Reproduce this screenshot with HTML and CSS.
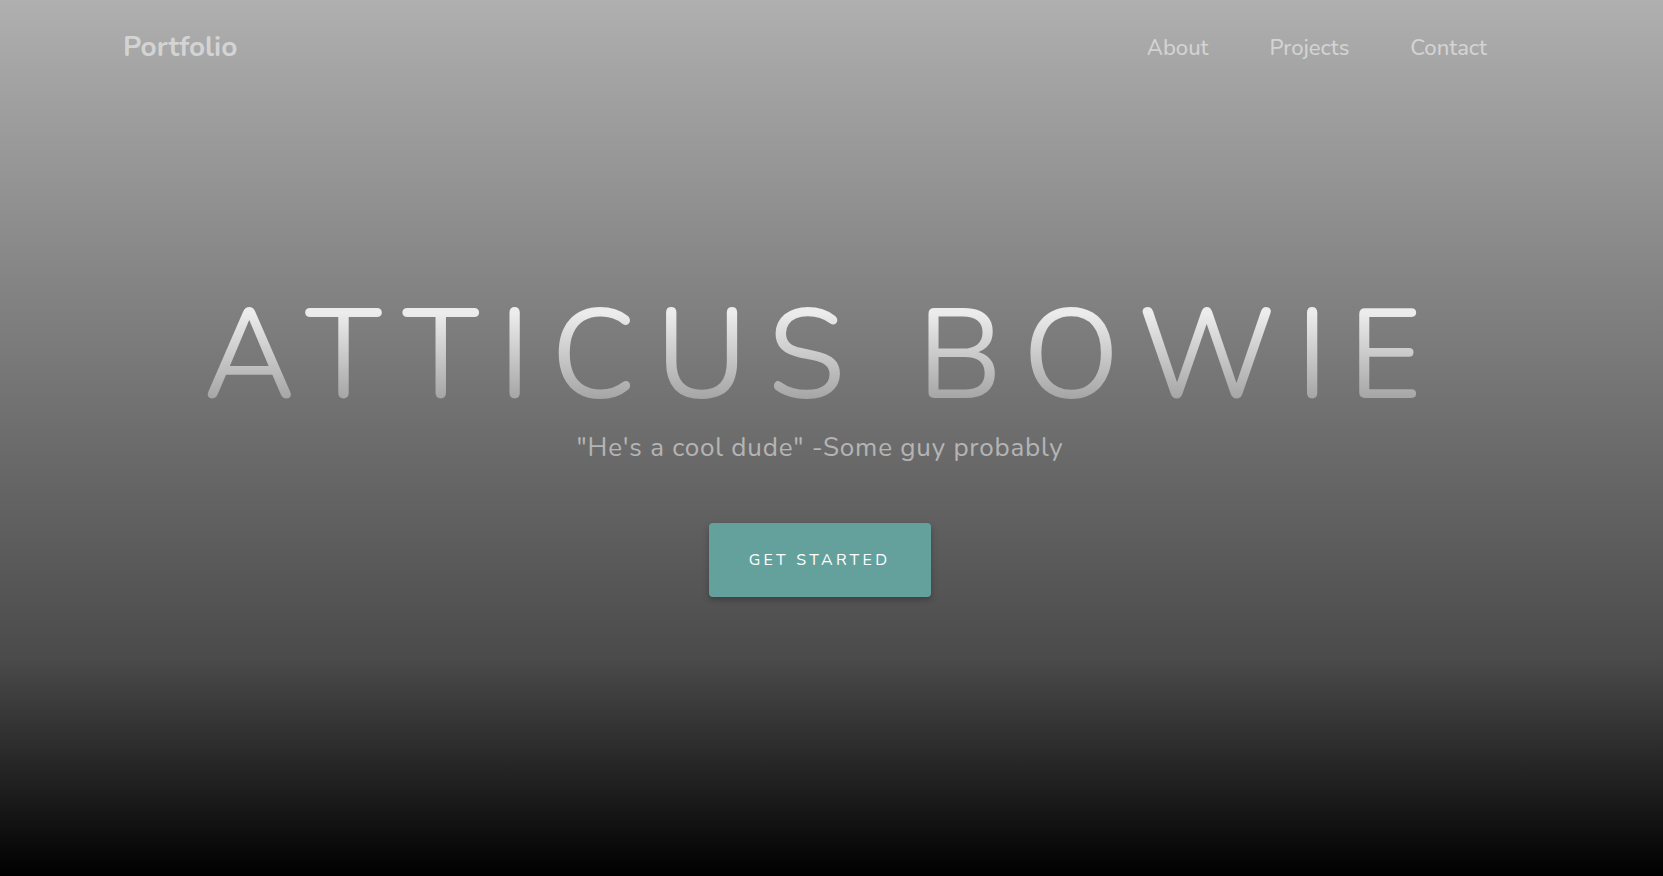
FILE: index.html
```html
<!DOCTYPE html>
<html lang="en">
<head>
<meta charset="utf-8">
<title>Portfolio</title>
<link rel="stylesheet" href="styles.css">
</head>
<body>
<div class="page">
  <nav class="nav">
    <a class="brand" href="#">Portfolio</a>
    <div class="links">
      <a href="#">About</a>
      <a href="#">Projects</a>
      <a href="#">Contact</a>
    </div>
  </nav>
  <header class="hero">
    <h1 class="title">ATTICUS BOWIE</h1>
    <p class="quote">"He's a cool dude" -Some guy probably</p>
    <a class="btn" href="#">Get Started</a>
  </header>
</div>
</body>
</html>
```
FILE: styles.css
```css
html, body {
  margin: 0;
  padding: 0;
}
body {
  font-family: "Nunito", "Lato", "Open Sans", sans-serif;
}
.page {
  height: 876px;
  box-sizing: border-box;
  background: linear-gradient(to bottom, rgba(0,0,0,0.3) 0%, rgba(0,0,0,0.7) 75%, #000 100%), #fbfbfb;
  padding-right: 23px;
}
.nav {
  display: flex;
  justify-content: space-between;
  align-items: center;
  padding: 31px 153px 0 123px;
}
.nav a {
  color: rgba(255,255,255,0.5);
  text-decoration: none;
}
.brand {
  font-size: 28px;
  font-weight: 700;
  line-height: 1.2;
}
.links {
  display: flex;
  gap: 61px;
  font-size: 22px;
  font-weight: 500;
  line-height: 1.2;
}
.hero {
  display: flex;
  flex-direction: column;
  align-items: center;
  padding-top: 216px;
}
.title {
  margin: 0 -5px 0 0;
  font-size: 126px;
  font-weight: 400;
  line-height: 1.2;
  letter-spacing: 20px;
  background: linear-gradient(to bottom, #ececec 32px, #9c9c9c 129px);
  -webkit-background-clip: text;
  background-clip: text;
  color: transparent;
  white-space: nowrap;
}
.quote {
  margin: 0;
  font-size: 26px;
  line-height: 1.2;
  letter-spacing: 0.8px;
  color: rgba(255,255,255,0.5);
}
.btn {
  margin-top: 60px;
  display: block;
  padding: 20px 41px 20px 40px;
  line-height: 34px;
  font-size: 16px;
  letter-spacing: 3.3px;
  text-transform: uppercase;
  color: #fff;
  text-decoration: none;
  background: #64a19d;
  border-radius: 4px;
  box-shadow: 0 3px 6px rgba(0,0,0,0.25);
}
```
